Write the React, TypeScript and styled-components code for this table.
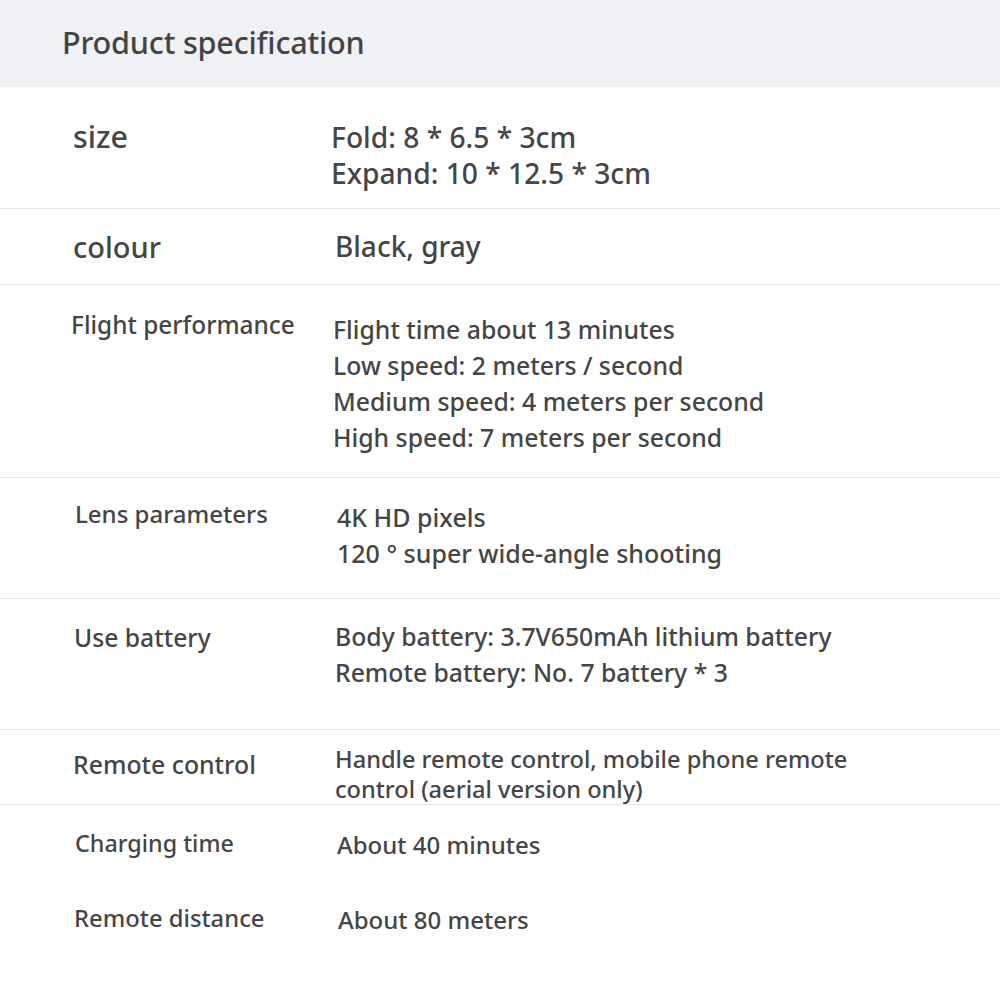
import React from "react";
import styled, { createGlobalStyle } from "styled-components";

const Global = createGlobalStyle`
  html, body { margin: 0; padding: 0; background: #ffffff; }
  body { font-family: "Noto Sans", "Open Sans", sans-serif; color: #454545; }
`;

const Page = styled.div`
  width: 1000px;
  height: 1000px;
  overflow: hidden;
  background: #ffffff;
  display: flex;
  flex-direction: column;
`;

const Header = styled.header`
  height: 87px;
  flex-shrink: 0;
  background: #f0f1f5;
  display: flex;
  align-items: center;
  padding-left: 62px;
  box-sizing: border-box;
`;

const Title = styled.h1`
  margin: 0;
  font-size: 30.6px;
  font-weight: 500;
  color: #444444;
  letter-spacing: -0.2px;
  padding-bottom: 4px;
`;

const Row = styled.div<{ $h: number; $pad: number; $border?: boolean }>`
  height: ${(p) => p.$h}px;
  flex-shrink: 0;
  box-sizing: border-box;
  display: grid;
  grid-template-columns: 261px 1fr;
  align-items: start;
  padding: ${(p) => p.$pad}px 0 0 73px;
  border-bottom: ${(p) => (p.$border ? "1px solid #e6e6e6" : "none")};
`;

const Label = styled.div<{ $size: number; $shift: number; $dx: number }>`
  font-size: ${(p) => p.$size}px;
  font-weight: 500;
  line-height: 36px;
  color: #454545;
  transform: translate(${(p) => p.$dx}px, ${(p) => p.$shift}px);
  white-space: nowrap;
`;

const Values = styled.div<{ $size: number; $lh: number; $dx: number }>`
  font-size: ${(p) => p.$size}px;
  font-weight: 500;
  line-height: ${(p) => p.$lh}px;
  color: #454545;
  white-space: nowrap;
  transform: translateX(${(p) => p.$dx}px);
`;

type Spec = {
  label: string;
  values: string[];
  h: number;
  pad: number;
  shift: number;
  lx: number;
  vx: number;
  ls: number;
  vs: number;
  lh?: number;
  border?: boolean;
};

const specs: Spec[] = [
  { label: "size", values: ["Fold: 8 * 6.5 * 3cm", "Expand: 10 * 12.5 * 3cm"], h: 122, pad: 32, shift: -1, lx: 0, vx: -3, ls: 30.5, vs: 28.2, border: true },
  { label: "colour", values: ["Black, gray"], h: 76, pad: 19, shift: 1, lx: 0, vx: 1, ls: 29, vs: 28, border: true },
  { label: "Flight performance", values: ["Flight time about 13 minutes", "Low speed: 2 meters / second", "Medium speed: 4 meters per second", "High speed: 7 meters per second"], h: 193, pad: 26, shift: -4, lx: -2, vx: -1, ls: 24.4, vs: 24.8, border: true },
  { label: "Lens parameters", values: ["4K HD pixels", "120 ° super wide-angle shooting"], h: 121, pad: 21, shift: -3, lx: 2, vx: 3, ls: 24, vs: 25, border: true },
  { label: "Use battery", values: ["Body battery: 3.7V650mAh lithium battery", "Remote battery: No. 7 battery * 3"], h: 131, pad: 20, shift: 1, lx: 1, vx: 1, ls: 24.7, vs: 24.75, border: true },
  { label: "Remote control", values: ["Handle remote control, mobile phone remote", "control (aerial version only)"], h: 75, pad: 14, shift: 2, lx: 0, vx: 1, ls: 24.8, vs: 23.6, lh: 30, border: true },
  { label: "Charging time", values: ["About 40 minutes"], h: 75, pad: 22, shift: -2, lx: 2, vx: 3, ls: 23.3, vs: 24 },
  { label: "Remote distance", values: ["About 80 meters"], h: 120, pad: 22, shift: -2, lx: 1, vx: 4, ls: 23.8, vs: 24 },
];

export default function App() {
  return (
    <Page>
      <Global />
      <Header>
        <Title>Product specification</Title>
      </Header>
      {specs.map((s) => (
        <Row key={s.label} $h={s.h} $pad={s.pad} $border={s.border}>
          <Label $size={s.ls} $shift={s.shift} $dx={s.lx}>{s.label}</Label>
          <Values $size={s.vs} $lh={s.lh ?? 36} $dx={s.vx}>
            {s.values.map((v) => (
              <div key={v}>{v}</div>
            ))}
          </Values>
        </Row>
      ))}
    </Page>
  );
}
